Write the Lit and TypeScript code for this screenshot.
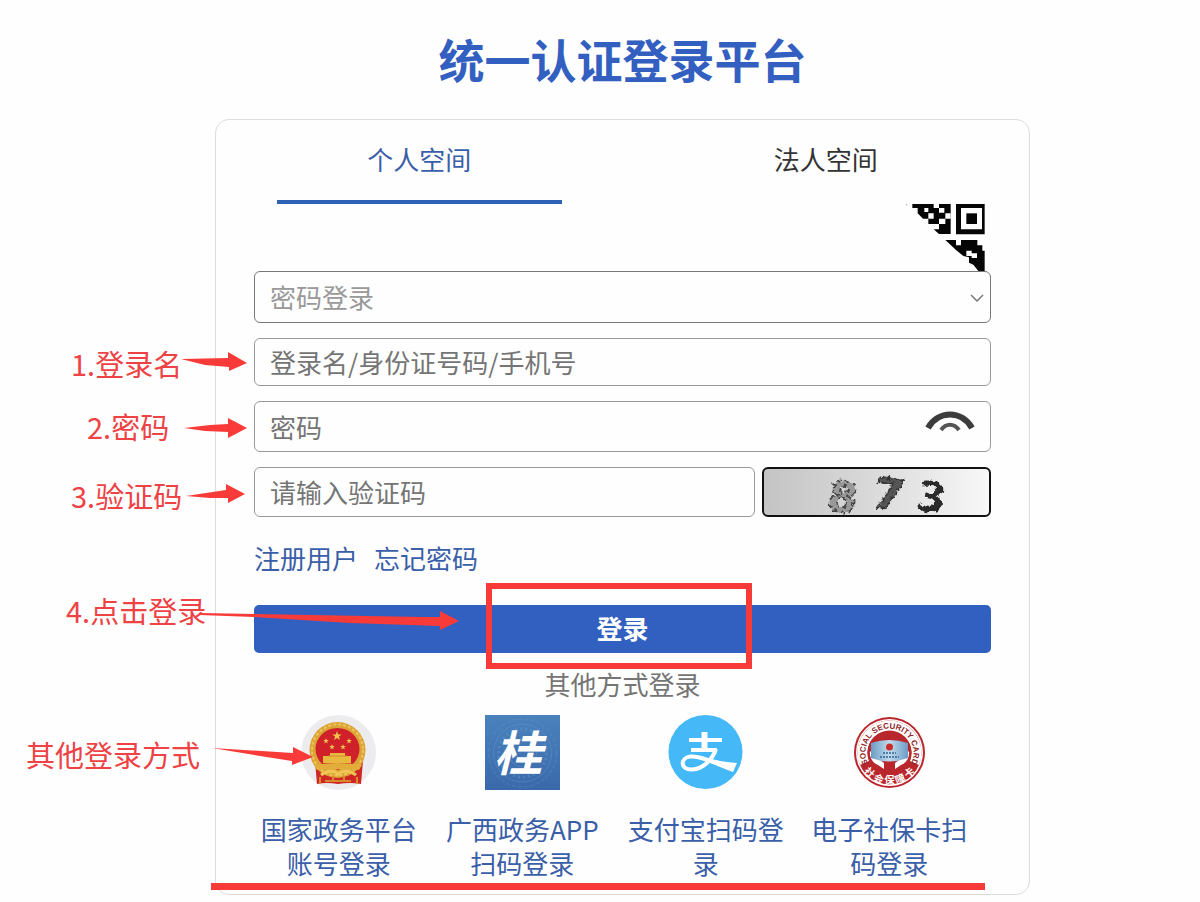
import { LitElement, html, css, svg } from "lit";
import { customElement, property, state } from "lit/decorators.js";
import { classMap } from "lit/directives/class-map.js";

type Provider = { id: string; label: string };

const PROVIDERS: Provider[] = [
  { id: "gov", label: "国家政务平台账号登录" },
  { id: "gui", label: "广西政务APP扫码登录" },
  { id: "alipay", label: "支付宝扫码登录" },
  { id: "card", label: "电子社保卡扫码登录" },
];

const star = (cx: number, cy: number, r: number) => {
  const pts: string[] = [];
  for (let i = 0; i < 10; i++) {
    const a = -Math.PI / 2 + (i * Math.PI) / 5;
    const k = i % 2 ? r * 0.4 : r;
    pts.push(`${(cx + k * Math.cos(a)).toFixed(2)},${(cy + k * Math.sin(a)).toFixed(2)}`);
  }
  return svg`<polygon points=${pts.join(" ")} fill="#f0c64a"></polygon>`;
};

const logos: Record<string, unknown> = {
  gov: html`<svg viewBox="0 0 75 75" aria-hidden="true">
    <circle cx="37.5" cy="37.5" r="37.5" fill="#ececee" />
    <path d="M14 46 L16 69 Q25 67 37 69 Q49 67 60 69 L62 46 Z" fill="#cf2626" />
    <ellipse cx="36.500" cy="35" rx="28" ry="28" fill="#dca436" />
    <ellipse cx="36.500" cy="35" rx="25.500" ry="25.500" fill="none" stroke="#edc45a" stroke-width="2" stroke-dasharray="3 2" />
    <ellipse cx="36.500" cy="34" rx="22" ry="21" fill="#d02029" />
    ${star(36, 21, 5)} ${star(25, 26, 3)} ${star(31, 32, 3)} ${star(42, 32, 3)} ${star(48, 26, 3)}
    <path d="M29 38 H44 V41 H50 V48 H22 V41 H29 Z" fill="#e8b93e" />
    <path d="M27 41 H46" stroke="#cf8a2a" stroke-width="1" />
    <path d="M13 50 Q36 46 61 50 L58 55 Q48 53 44 57 L37 54 L30 57 Q25 53 16 55 Z" fill="#e2ad3a" />
    <path d="M20 60 Q30 53 37 59 Q45 53 55 60" fill="none" stroke="#f0c654" stroke-width="3" />
    <path d="M24 66 H50 M19 62 V69 M56 62 V69 M32 61 V67 M43 61 V67" stroke="#d98a2c" stroke-width="2" />
  </svg>`,
  gui: html`<svg viewBox="0 0 75 75" aria-hidden="true">
    <defs>
      <linearGradient id="tile" x1="0" y1="0" x2="0" y2="1">
        <stop offset="0" stop-color="#4a82bd" />
        <stop offset="1" stop-color="#3a69aa" />
      </linearGradient>
    </defs>
    <rect width="75" height="75" fill="url(#tile)" />
    <g fill="none" stroke="#6c9ccd" stroke-opacity="0.4">
      <circle cx="37.500" cy="38" r="34" stroke-dasharray="4 2" />
      <circle cx="37.500" cy="38" r="29" />
      <circle cx="37.500" cy="38" r="24" stroke-dasharray="2 3" stroke-width="3" />
      <circle cx="37.500" cy="38" r="14" />
    </g>
    <text class="brush" x="33" y="56" text-anchor="middle">桂</text>
  </svg>`,
  alipay: html`<svg viewBox="0 0 75 75" aria-hidden="true">
    <circle cx="37.500" cy="37" r="37" fill="#45b8f7" />
    <g fill="none" stroke="#fff">
      <path d="M36.500 17 V34" stroke-width="6" />
      <path d="M21 25 H54" stroke-width="4" />
      <path d="M23 35 H49" stroke-width="4" />
      <path d="M48 34 C45 43 36 54 24 54.500 C12 55 12 43 22 41.500 C34 40 44 49 66 52" stroke-width="4" />
    </g>
    <path d="M40 43 Q53 47 69 48 L65 57 Q54 53 40 47 Z" fill="#fff" />
  </svg>`,
  card: html`<svg viewBox="0 0 75 75" aria-hidden="true">
    <defs>
      <path id="upper" d="M15.700 47.600 A24 24 0 1 1 59.300 47.600" />
      <path id="lower" d="M7.500 48.500 A32 32 0 0 0 67.500 48.500" />
      <linearGradient id="plate" x1="0" y1="0" x2="1" y2="0">
        <stop offset="0" stop-color="#6b9cc4" />
        <stop offset="0.5" stop-color="#c2dcee" />
        <stop offset="1" stop-color="#6b9cc4" />
      </linearGradient>
    </defs>
    <circle cx="37.500" cy="37.500" r="35.500" fill="#b9272d" />
    <circle cx="37.500" cy="37.500" r="33.500" fill="#fff" />
    <circle cx="37.500" cy="37.500" r="32" fill="#b9272d" />
    <path d="M8 50 A32 32 0 1 1 67 50 L58 46 A22 22 0 1 0 17 46 Z" fill="#fff" />
    <circle cx="37.500" cy="37.500" r="22" fill="#b9272d" />
    <path d="M18 36 Q17 46 26 50 L32 54 V48 L24 42 Z M57 36 Q58 46 49 50 L43 54 V48 L51 42 Z" fill="#fff" />
    <path d="M19 28 Q37 22 56 28 V43 Q37 50 19 43 Z" fill="url(#plate)" />
    <circle cx="37.500" cy="32" r="3.500" fill="#cf2a2a" />
    <path d="M31 38 H44 M28 42 H47" stroke="#35648f" stroke-width="1.500" stroke-dasharray="2 1" />
    <text class="ring"><textPath href="#upper" startOffset="50%" text-anchor="middle">SOCIAL SECURITY CARD</textPath></text>
    <text class="seal"><textPath href="#lower" startOffset="50%" text-anchor="middle">社 会 保 障 卡</textPath></text>
  </svg>`,
};

@customElement("login-provider")
export class LoginProvider extends LitElement {
  @property() kind = "";
  @property() label = "";

  static styles = css`
    :host {
      display: block;
    }
    .link {
      display: flex;
      flex-direction: column;
      align-items: center;
      gap: 22px;
      padding: 0 12px;
      color: #3a5ea8;
      font-size: 26px;
      line-height: 34px;
      text-align: center;
      text-decoration: none;
    }
    svg {
      display: block;
      width: 75px;
      height: 75px;
    }
    .brush {
      font: italic 700 48px "Noto Sans CJK SC", sans-serif;
      fill: #fff;
    }
    .ring {
      font: 700 8px "Liberation Sans", sans-serif;
      fill: #8f2328;
    }
    .seal {
      font: 700 10px "Noto Sans CJK SC", sans-serif;
      fill: #fff;
    }
  `;

  render() {
    return html`<a class="link" href="#${this.kind}">${logos[this.kind]}<span>${this.label}</span></a>`;
  }
}

@customElement("guide-marks")
export class GuideMarks extends LitElement {
  static styles = css`
    :host {
      position: absolute;
      top: 0;
      left: 0;
      pointer-events: none;
    }
    svg {
      display: block;
      overflow: visible;
    }
    text {
      font: 29px "Noto Sans CJK SC", sans-serif;
    }
  `;

  render() {
    return html`<svg width="1" height="1">
      <g transform="translate(-216 -120)" fill="#f83b38">
        <g fill="#ee4245">
          <text x="71" y="376">1.登录名</text>
          <text x="87" y="439">2.密码</text>
          <text x="71" y="508">3.验证码</text>
          <text x="66" y="623">4.点击登录</text>
          <text x="26" y="767">其他登录方式</text>
        </g>
        <path d="M181 359 L228 358 L228 352 L247 363 L229 371 L229 367 L205 365 Z" />
        <path d="M184 428 L210 425 L228 424 L228 418 L247 428 L228 438 L228 432 L205 431 Z" />
        <path d="M186 496 L226 490 L226 484 L245 494 L228 503 L228 498 L210 498 Z" />
        <path d="M200 613 L424 617 L440 617 L440 611 L459 621 L440 630 L440 626 L350 623 L254 617 L200 615 Z" />
        <path d="M212 748 L293 753 L293 747 L313 757 L292 765 L292 761 L260 756 Z" />
        <rect x="489" y="586" width="260" height="80" fill="none" stroke="#f83b38" stroke-width="6" />
        <rect x="211" y="883" width="774" height="7" />
      </g>
    </svg>`;
  }
}

@customElement("app-root")
export class AppRoot extends LitElement {
  @state() private tab = 0;

  static styles = css`
    :host {
      display: block;
      box-sizing: border-box;
      padding: 31px 0 7px 45px;
      background: #fefefe;
      color: #333;
      font-family: "Noto Sans CJK SC", sans-serif;
      font-size: 26px;
      overflow: hidden;
    }
    * {
      box-sizing: border-box;
    }
    .title {
      margin: 0 0 34px;
      color: #3360c0;
      font-size: 46px;
      line-height: 54px;
      text-align: center;
    }
    .card {
      position: relative;
      max-width: 815px;
      margin: 0 auto;
      padding-bottom: 14px;
      border: 1px solid #dcdcdc;
      border-radius: 14px;
    }
    .tabs {
      display: grid;
      grid-template-columns: 1fr 1fr;
    }
    .tab {
      display: flex;
      flex-direction: column;
      align-items: center;
      gap: 21px;
      padding: 19px 0 0;
      border: 0;
      background: none;
      color: #333;
      font: inherit;
      line-height: 40px;
    }
    .tab::after {
      content: "";
      width: 70%;
      height: 4px;
    }
    .active {
      color: #3a5ea8;
    }
    .active::after {
      background: #2f62b4;
    }
    .form {
      display: flex;
      flex-direction: column;
      padding: 0 38px;
    }
    .qr {
      align-self: flex-end;
      padding: 0;
      margin-right: 6px;
      border: 0;
      background: none;
    }
    .qr svg {
      display: block;
    }
    .fields {
      display: grid;
      gap: 15px;
    }
    .box {
      position: relative;
      display: grid;
    }
    .input {
      width: 100%;
      min-width: 0;
      height: 48px;
      margin: 0;
      padding: 0 15px 1px;
      border: 1px solid #999;
      border-radius: 6px;
      background: #fefefe;
      color: #757575;
      font: inherit;
      appearance: none;
    }
    .input::placeholder {
      color: #757575;
      opacity: 1;
    }
    .select {
      height: 52px;
      border-color: #777;
      color: #999;
    }
    .password {
      height: 51px;
    }
    .chevron {
      position: absolute;
      right: 7px;
      top: 21px;
      pointer-events: none;
    }
    .eye {
      position: absolute;
      right: 16px;
      top: 6px;
      padding: 0;
      border: 0;
      background: none;
    }
    .eye svg,
    .captcha svg {
      display: block;
    }
    .captcha svg {
      overflow: visible;
    }
    .code {
      display: grid;
      grid-template-columns: 1fr 229px;
      gap: 7px;
    }
    .code .input,
    .captcha {
      height: 50px;
    }
    .captcha {
      padding: 0;
      border: 2px solid #111;
      border-radius: 6px;
      background: linear-gradient(to right, #c4c4c4, #d8d8d8 45%, #f8f8f8);
    }
    .digits {
      font: 700 42px "DejaVu Sans", sans-serif;
    }
    .links {
      display: flex;
      gap: 16px;
      padding: 21px 0 27px;
      line-height: 40px;
    }
    .links a {
      color: #3a5ea8;
      text-decoration: none;
    }
    .submit {
      height: 48px;
      padding: 0 0 3px;
      border: 0;
      border-radius: 5px;
      background: #3160c0;
      color: #fff;
      font: inherit;
      font-weight: 700;
    }
    .other {
      margin: 11px 0;
      color: #757575;
      font-size: 26px;
      font-weight: 400;
      line-height: 40px;
      text-align: center;
    }
    .providers {
      display: grid;
      grid-template-columns: repeat(4, 1fr);
      margin: 0 10px 0 -7px;
    }
  `;

  private renderQr() {
    return html`<button class="qr" type="button" aria-label="扫码登录">
      <svg width="80" height="67" viewBox="45 42 240 201">
        <path
          fill="#050505"
          d="M67 42 H182 V132 H147 L131 118 H147 V102 H115 V86 H99 L83 70 V54 H67 Z M198 42 H284 V133 H198 Z M166 150 H198 V166 H213 V150 H262 V166 H277 V182 H284 V243 H265 L250 224 L237 218 V202 L220 198 L198 180 Z"
        />
        <path
          fill="#fefefe"
          d="M103 54 H115 V66 H103 Z M131 42 H147 V54 H131 Z M115 70 H131 V86 H115 Z M147 54 H163 V68 H147 Z M166 70 H182 V86 H166 Z M147 86 H166 V102 H147 Z M213 54 H276 V118 H213 Z M229 182 H245 V198 H229 Z M245 190 H261 V204 H245 Z"
        />
        <path fill="#050505" d="M229 70 H261 V102 H229 Z" />
        <circle cx="50" cy="44" r="2" fill="#999" />
      </svg>
    </button>`;
  }

  private renderCaptcha() {
    return html`<button class="captcha" type="button" aria-label="验证码 873">
      <svg width="225" height="46" viewBox="0 0 225 46">
        <defs>
          <filter id="rough" x="-10%" y="-10%" width="120%" height="120%">
            <feTurbulence type="fractalNoise" baseFrequency="0.2" numOctaves="2" seed="4" />
            <feDisplacementMap in="SourceGraphic" scale="7" xChannelSelector="R" yChannelSelector="G" />
            <feGaussianBlur stdDeviation="0.7" />
          </filter>
        </defs>
        <g class="digits" filter="url(#rough)">
          <text x="64" y="43" transform="rotate(10 80 28)" fill="#999" stroke="#444" stroke-width="2" stroke-dasharray="5 3">8</text>
          <text x="110" y="40" transform="rotate(10 126 24)" fill="#555" stroke="#333" stroke-width="2" stroke-dasharray="5 2">7</text>
          <text x="153" y="43" transform="rotate(8 168 28)" fill="#2c2c2c">3</text>
        </g>
      </svg>
    </button>`;
  }

  render() {
    return html`
      <h1 class="title">统一认证登录平台</h1>
      <main class="card">
        <div class="tabs" role="tablist">
          ${["个人空间", "法人空间"].map(
            (name, i) => html`<button
              class=${classMap({ tab: true, active: this.tab === i })}
              role="tab"
              aria-selected=${this.tab === i}
              @click=${() => (this.tab = i)}
            >
              ${name}
            </button>`
          )}
        </div>
        <form class="form" @submit=${(e: Event) => e.preventDefault()}>
          ${this.renderQr()}
          <div class="fields">
            <div class="box">
              <select class="input select" aria-label="登录方式">
                <option>密码登录</option>
              </select>
              <svg class="chevron" width="14" height="12" viewBox="0 0 14 12" fill="none" stroke="#777" stroke-width="1.500">
                <path d="M1 3 L7 9 L13 3" />
              </svg>
            </div>
            <input class="input" type="text" aria-label="登录名" placeholder="登录名/身份证号码/手机号" />
            <div class="box">
              <input class="input password" type="password" aria-label="密码" placeholder="密码" />
              <button class="eye" type="button" aria-label="显示密码">
                <svg width="50" height="28" viewBox="0 0 50 28" fill="none" stroke="#3c3c3c">
                  <path d="M3 21 C13 3 37 3 47 21" stroke-width="6" />
                  <path d="M16 23 C21 16 29 16 34 23" stroke-width="4" stroke="#555" />
                </svg>
              </button>
            </div>
            <div class="code">
              <input class="input" type="text" aria-label="验证码" placeholder="请输入验证码" />
              ${this.renderCaptcha()}
            </div>
          </div>
          <nav class="links"><a href="#register">注册用户</a><a href="#forgot">忘记密码</a></nav>
          <button class="submit" type="submit">登录</button>
          <h2 class="other">其他方式登录</h2>
          <div class="providers">
            ${PROVIDERS.map((p) => html`<login-provider .kind=${p.id} .label=${p.label}></login-provider>`)}
          </div>
        </form>
        <guide-marks></guide-marks>
      </main>
    `;
  }
}
